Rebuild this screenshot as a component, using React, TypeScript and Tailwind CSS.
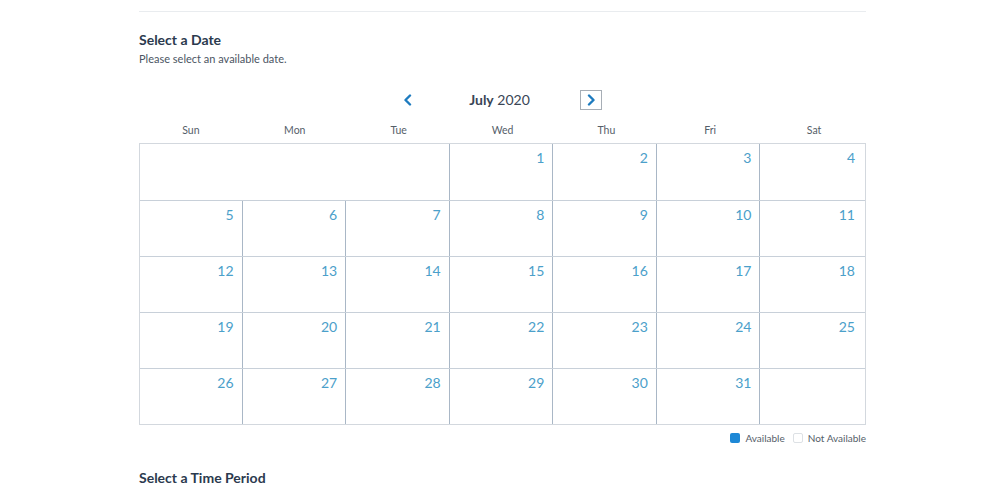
import React from 'react'

const days = ['Sun', 'Mon', 'Tue', 'Wed', 'Thu', 'Fri', 'Sat']

// July 2020 starts on a Wednesday
const weeks: (number | null)[][] = [
  [null, null, null, 1, 2, 3, 4],
  [5, 6, 7, 8, 9, 10, 11],
  [12, 13, 14, 15, 16, 17, 18],
  [19, 20, 21, 22, 23, 24, 25],
  [26, 27, 28, 29, 30, 31, null],
]

function Chevron({ dir }: { dir: 'left' | 'right' }) {
  return (
    <svg width="10" height="12" viewBox="0 0 10 12" fill="none">
      <path
        d={dir === 'left' ? 'M7 1.5 L2.5 6 L7 10.5' : 'M3 1.5 L7.5 6 L3 10.5'}
        stroke="#1d7bbf"
        strokeWidth="2.4"
        strokeLinecap="round"
        strokeLinejoin="round"
      />
    </svg>
  )
}

export default function App() {
  return (
    <div className="min-h-[490px] bg-white font-['Lato','Noto_Sans',sans-serif]">
      <div className="ml-[139px] w-[727px] pt-[11px]">
        <div className="h-px bg-[#e9ecef]" />

        {/* Select a Date */}
        <h2 className="mt-[19px] text-[14px] font-bold leading-[18px] text-[#2b3a4e]">Select a Date</h2>
        <p className="mt-[3px] text-[11px] leading-[14px] text-[#4b5563]">Please select an available date.</p>

        {/* Month nav */}
        <div className="mt-[24px] flex items-center justify-center gap-[50px] pr-[6px]">
          <button className="flex h-[20px] w-[22px] items-center justify-center">
            <Chevron dir="left" />
          </button>
          <div className="text-[14px] leading-[20px] text-[#3a4656]">
            <span className="font-bold">July</span> <span>2020</span>
          </div>
          <button className="flex h-[20px] w-[22px] items-center justify-center border border-[#a7aeb6]">
            <Chevron dir="right" />
          </button>
        </div>

        {/* Day headers */}
        <div className="mt-[13px] grid grid-cols-7">
          {days.map((d) => (
            <div key={d} className="text-center text-[10.5px] leading-[14px] text-[#555e69]">
              {d}
            </div>
          ))}
        </div>

        {/* Calendar grid */}
        <div className="mt-[6px] border border-[#d3d8de]">
          {weeks.map((week, wi) => (
            <div key={wi} className={`grid h-[56px] grid-cols-7 ${wi > 0 ? 'border-t border-[#c8d0d9]' : ''}`}>
              {wi === 0 ? (
                <>
                  <div className="col-span-3" />
                  {week.slice(3).map((n, i) => (
                    <div
                      key={i}
                      className="-ml-[2px] border-l border-[#a9b7c6] pr-[10px] pt-[5px] text-right text-[14px] leading-[18px] text-[#4ba0ca]"
                    >
                      {n}
                    </div>
                  ))}
                </>
              ) : (
                week.map((n, i) => (
                  <div
                    key={i}
                    className={`pr-[10px] pt-[5px] text-right text-[14px] leading-[18px] text-[#4ba0ca] ${
                      i > 0 ? '-ml-[2px] border-l border-[#a9b7c6]' : ''
                    }`}
                  >
                    {n}
                  </div>
                ))
              )}
            </div>
          ))}
        </div>

        {/* Legend */}
        <div className="mt-[7px] flex items-center justify-end gap-[6px] text-[10px] leading-[12px] text-[#555e69]">
          <div className="flex items-center gap-[5px]">
            <span className="inline-block h-[10px] w-[10px] rounded-[2px] bg-[#1e88d6]" />
            <span>Available</span>
          </div>
          <div className="ml-[2px] flex items-center gap-[5px]">
            <span className="inline-block h-[10px] w-[10px] rounded-[2px] border border-[#dde1e5] bg-white" />
            <span>Not Available</span>
          </div>
        </div>

        {/* Select a Time Period */}
        <h2 className="mt-[25px] text-[14px] font-bold leading-[18px] text-[#2b3a4e]">Select a Time Period</h2>
      </div>
    </div>
  )
}
